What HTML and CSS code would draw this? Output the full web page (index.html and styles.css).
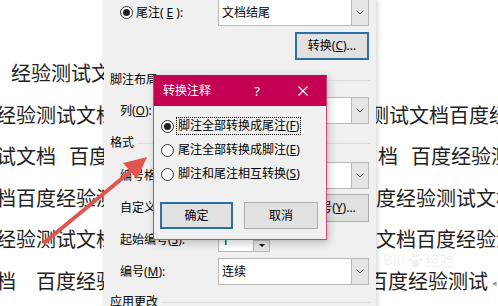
FILE: index.html
```html
<!DOCTYPE html>
<html lang="zh-CN">
  <head>
    <meta charset="UTF-8" />
    <meta name="viewport" content="width=device-width, initial-scale=1.0" />
    <title>转换注释</title>
    <link rel="stylesheet" href="styles.css">
  </head>
  <body>
    <div class="page">
      <!-- only the parts of the document that show round the dialogs -->
      <div class="doc">
        <p class="line indent">经验测试文档</p>
        <p class="line">经验测试文档<span class="hole"></span>测试文档百度经验</p>
        <p class="line">试文档<span class="gap"></span>百度<span class="hole"></span>档<span class="gap"></span>百度经验测</p>
        <p class="line">档百度经验测<span class="hole"></span>度经验测试文档</p>
        <p class="line">经验测试文档<span class="hole"></span>文档百度经验测</p>
        <p class="line">档<span class="gap wide"></span>百度经验<span class="hole"></span>百度经验测试<span class="mark">◂</span></p>
      </div>

      <div class="watermark">
        <span>Bai</span>
        <svg width="17" height="17" viewBox="0 0 16 16">
          <g fill="currentColor">
            <ellipse cx="8" cy="11" rx="4" ry="3.5" />
            <circle cx="3" cy="7" r="1.8" />
            <circle cx="6" cy="3.5" r="1.8" />
            <circle cx="10" cy="3.5" r="1.8" />
            <circle cx="13" cy="7" r="1.8" />
          </g>
        </svg>
        <span>经验</span>
      </div>

      <!-- 脚注和尾注 -->
      <div class="win">
        <div class="row">
          <label class="opt"><span class="radio on"></span>尾注(<u>E</u>):</label>
          <div class="combo">
            <span>文档结尾</span>
            <span class="drop"><svg width="8" height="5" viewBox="0 0 8 5"><path d="M0.5 0.5L4 4L7.5 0.5" fill="none" stroke="#555" /></svg></span>
          </div>
        </div>
        <div class="row-end"><button class="btn focus">转换(<u>C</u>)...</button></div>

        <div class="group first">脚注布局</div>
        <div class="row">
          <span>列(<u>O</u>):</span>
          <div class="combo">
            <span></span>
            <span class="drop"><svg width="8" height="5" viewBox="0 0 8 5"><path d="M0.5 0.5L4 4L7.5 0.5" fill="none" stroke="#555" /></svg></span>
          </div>
        </div>

        <div class="group">格式</div>
        <div class="row">
          <span>编号格式(<u>N</u>):</span>
          <div class="combo">
            <span></span>
            <span class="drop"><svg width="8" height="5" viewBox="0 0 8 5"><path d="M0.5 0.5L4 4L7.5 0.5" fill="none" stroke="#555" /></svg></span>
          </div>
        </div>
        <div class="row">
          <span>自定义标记(<u>U</u>):</span>
          <div class="pair">
            <span class="field"></span>
            <button class="btn">符号(<u>Y</u>)...</button>
          </div>
        </div>
        <div class="row spin-row">
          <span>起始编号(<u>S</u>):</span>
          <div class="spin">
            <span class="spin-val">1</span>
            <span class="spin-btns"><span class="up"></span><span class="down"></span></span>
          </div>
        </div>
        <div class="row">
          <span>编号(<u>M</u>):</span>
          <div class="combo">
            <span>连续</span>
            <span class="drop"><svg width="8" height="5" viewBox="0 0 8 5"><path d="M0.5 0.5L4 4L7.5 0.5" fill="none" stroke="#555" /></svg></span>
          </div>
        </div>

        <div class="group last">应用更改</div>
      </div>

      <!-- 转换注释 -->
      <div class="modal">
        <div class="modal-title">
          <span class="modal-name">转换注释</span>
          <span class="tbtn">?</span>
          <span class="tbtn">
            <svg width="10" height="10" viewBox="0 0 10 10"><path d="M0.5 0.5L9.5 9.5M9.5 0.5L0.5 9.5" stroke="#fff" stroke-width="1.1" /></svg>
          </span>
        </div>
        <div class="modal-body">
          <div class="choice"><span class="radio on"></span><span class="text focus">脚注全部转换成尾注(<u>F</u>)</span></div>
          <div class="choice"><span class="radio"></span><span class="text">尾注全部转换成脚注(<u>E</u>)</span></div>
          <div class="choice"><span class="radio"></span><span class="text">脚注和尾注相互转换(<u>S</u>)</span></div>
          <div class="actions">
            <button class="btn default">确定</button>
            <button class="btn">取消</button>
          </div>
        </div>
      </div>

      <svg class="arrow" width="498" height="306" viewBox="0 0 498 306">
        <line x1="45" y1="242" x2="131" y2="171" stroke="#e2554e" stroke-width="4" stroke-linecap="round" />
        <polygon points="147,157 123,163 137,179" fill="#e2554e" />
      </svg>
    </div>
  </body>
</html>
```

FILE: styles.css
```css
body {
  margin: 0;
  font-family: "Noto Sans CJK SC", "Noto Sans", sans-serif;
}
.page {
  position: relative;
  width: 498px;
  height: 306px;
  overflow: hidden;
  background: #fff;
}

/* document behind the dialogs */
.doc {
  margin-left: -4px;
  padding-top: 52px;
  font-size: 20px;
  line-height: 41.5px;
  color: #222;
  white-space: nowrap;
}
.line {
  margin: 0;
}
.line.indent {
  padding-left: 15px;
}
.gap {
  display: inline-block;
  width: 13px;
}
.gap.wide {
  width: 20px;
}
.hole {
  display: inline-block;
  width: 260px;
}
.line:nth-child(2) .hole {
  width: 253px;
}
.line:nth-child(3) .hole {
  width: 269px;
}
.line:nth-child(6) .hole {
  width: 252px;
}
.mark {
  font-size: 9px;
  color: #999;
  margin-left: 4px;
  vertical-align: middle;
}
.watermark {
  position: absolute;
  left: 383px;
  top: 250px;
  display: flex;
  align-items: center;
  gap: 2px;
  color: rgba(0, 0, 0, 0.06);
  font: bold 14px "Liberation Sans", "Noto Sans CJK SC", sans-serif;
}

/* shared controls */
.win,
.modal {
  font-family: "Noto Sans", "Noto Sans CJK SC", sans-serif;
  font-size: 12px;
  line-height: 16px;
  color: #000;
}
.radio {
  flex: none;
  width: 13px;
  height: 13px;
  box-sizing: border-box;
  border: 1px solid #333;
  border-radius: 50%;
  background: #fff;
  display: flex;
  align-items: center;
  justify-content: center;
}
.radio.on::after {
  content: "";
  width: 7px;
  height: 7px;
  border-radius: 50%;
  background: #222;
}
.btn {
  box-sizing: border-box;
  width: 74px;
  height: 28px;
  padding: 0;
  font: inherit;
  color: #000;
  background: #e1e1e1;
  border: 1px solid #adadad;
}
.btn.focus,
.btn.default {
  border: 2px solid #2c6ea5;
}
.combo {
  display: flex;
  align-items: center;
  height: 27px;
  box-sizing: border-box;
  padding-left: 3px;
  border: 1px solid #b9b9b9;
  background: #fff;
}
.drop {
  margin-left: auto;
  align-self: stretch;
  width: 16px;
  display: flex;
  align-items: center;
  justify-content: center;
  background: #e5e5e5;
  border-left: 1px solid #b9b9b9;
}

/* footnote dialog */
.win {
  position: absolute;
  left: 104px;
  top: -1px;
  width: 259px;
  height: 330px;
  padding: 0 7px 0 6px;
  background: #f0f0f0;
  box-shadow: 1px 0 5px rgba(0, 0, 0, 0.2);
}
.row {
  display: grid;
  grid-template-columns: 98px 151px;
  align-items: center;
  padding-left: 10px;
  margin-top: 5px;
}
.win > .row:first-child,
.group + .row {
  margin-top: 0;
}
.opt {
  display: flex;
  align-items: center;
  gap: 3px;
}
.row-end {
  display: flex;
  justify-content: flex-end;
  margin-top: 6px;
}
.group {
  display: flex;
  align-items: center;
  gap: 3px;
  margin: 11px 0;
}
.group::after {
  content: "";
  flex: 1;
  height: 1px;
  margin-right: -1px;
  background: #dcdcdc;
}
.group.first {
  margin: 12px 0 9px;
}
.group.last {
  margin-top: 9px;
}
.pair {
  display: flex;
  gap: 4px;
}
.field {
  flex: 1;
  border: 1px solid #b9b9b9;
  background: #fff;
}
.spin-row {
  height: 26px;
}
.spin {
  display: flex;
  width: 52px;
  height: 23px;
  box-sizing: border-box;
  border: 1px solid #b9b9b9;
  background: #fff;
}
.spin-val {
  flex: 1;
  padding-left: 3px;
  line-height: 21px;
}
.spin-btns {
  width: 15px;
  display: flex;
  flex-direction: column;
  border-left: 1px solid #b9b9b9;
}
.spin-btns span {
  flex: 1;
  display: flex;
  align-items: center;
  justify-content: center;
  background: #e5e5e5;
}
.spin-btns span + span {
  border-top: 1px solid #b9b9b9;
}
.spin-btns .up::before {
  content: "";
  border: 3px solid transparent;
  border-top: 0;
  border-bottom: 3px solid #000;
}
.spin-btns .down::before {
  content: "";
  border: 3px solid transparent;
  border-bottom: 0;
  border-top: 3px solid #000;
}

/* convert notes dialog */
.modal {
  position: absolute;
  left: 153px;
  top: 75px;
  width: 172px;
  height: 163px;
  border: 1px solid #c9467a;
  border-top-color: #c40052;
  background: #f0f0f0;
  box-shadow: 2px 3px 8px rgba(0, 0, 0, 0.22);
}
.modal-title {
  display: flex;
  align-items: center;
  height: 30px;
  background: #c40052;
  color: #fff;
}
.modal-name {
  flex: 1;
  padding-left: 9px;
}
.tbtn {
  width: 46px;
  display: flex;
  justify-content: center;
  font-size: 13px;
}
.modal-body {
  padding: 8px 0 0 6px;
}
.choice {
  display: flex;
  align-items: center;
  gap: 2px;
  height: 24px;
  padding-left: 1px;
}
.choice .text {
  padding: 0 1px;
  border: 1px dotted transparent;
}
.choice .text.focus {
  border-color: #000;
}
.actions {
  display: flex;
  gap: 11px;
  margin-top: 16px;
}
.actions .btn {
  height: 27px;
}
.actions .btn.default {
  width: 73px;
}

.arrow {
  position: absolute;
  left: 0;
  top: 0;
}
```
